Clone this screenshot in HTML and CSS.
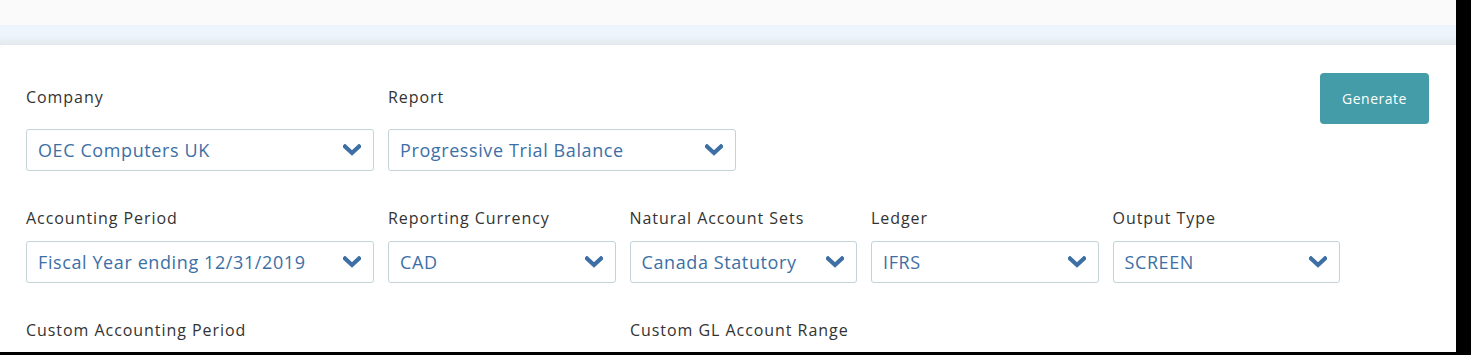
FILE: index.html
```html
<!DOCTYPE html>
<html lang="en">
<head>
    <meta charset="UTF-8">
    <meta name="viewport" content="width=device-width, initial-scale=1.0">
    <title>Report Generator</title>
    <link rel="stylesheet" href="styles.css">
</head>
<body>
    <div class="page">
        <div class="top-bar"></div>
        <div class="band"></div>

        <!-- Report form card -->
        <div class="card">
            <div class="form-row first-row">
                <div class="field wide">
                    <label>Company</label>
                    <div class="select">
                        <span>OEC Computers UK</span>
                        <svg class="chevron" viewBox="0 0 18 12"><path d="M2 2.5 L9 9 L16 2.5" /></svg>
                    </div>
                </div>
                <div class="field wide">
                    <label>Report</label>
                    <div class="select">
                        <span>Progressive Trial Balance</span>
                        <svg class="chevron" viewBox="0 0 18 12"><path d="M2 2.5 L9 9 L16 2.5" /></svg>
                    </div>
                </div>
                <button class="generate-btn">Generate</button>
            </div>

            <div class="form-row">
                <div class="field wide">
                    <label>Accounting Period</label>
                    <div class="select">
                        <span>Fiscal Year ending 12/31/2019</span>
                        <svg class="chevron" viewBox="0 0 18 12"><path d="M2 2.5 L9 9 L16 2.5" /></svg>
                    </div>
                </div>
                <div class="field">
                    <label>Reporting Currency</label>
                    <div class="select">
                        <span>CAD</span>
                        <svg class="chevron" viewBox="0 0 18 12"><path d="M2 2.5 L9 9 L16 2.5" /></svg>
                    </div>
                </div>
                <div class="field">
                    <label>Natural Account Sets</label>
                    <div class="select">
                        <span>Canada Statutory</span>
                        <svg class="chevron" viewBox="0 0 18 12"><path d="M2 2.5 L9 9 L16 2.5" /></svg>
                    </div>
                </div>
                <div class="field">
                    <label>Ledger</label>
                    <div class="select">
                        <span>IFRS</span>
                        <svg class="chevron" viewBox="0 0 18 12"><path d="M2 2.5 L9 9 L16 2.5" /></svg>
                    </div>
                </div>
                <div class="field">
                    <label>Output Type</label>
                    <div class="select">
                        <span>SCREEN</span>
                        <svg class="chevron" viewBox="0 0 18 12"><path d="M2 2.5 L9 9 L16 2.5" /></svg>
                    </div>
                </div>
            </div>

            <div class="form-row">
                <div class="field half">
                    <label>Custom Accounting Period</label>
                </div>
                <div class="field">
                    <label>Custom GL Account Range</label>
                </div>
            </div>
        </div>
    </div>
</body>
</html>
```

FILE: styles.css
```css
/* Global */
body, html {
    margin: 0;
    padding: 0;
    background-color: #000;
    font-family: 'Open Sans', 'Noto Sans', sans-serif;
}

.page {
    width: 1456px;
    height: 352px;
    overflow: hidden;
    background-color: #fafafa;
}

/* Header strips */
.top-bar {
    height: 25px;
    background-color: #fafafa;
}

.band {
    height: 20px;
    background: linear-gradient(#edf4fb 0%, #edf4fb 55%, #e2e8ee 100%);
}

/* Card */
.card {
    background-color: #fff;
    border-top-left-radius: 4px;
    padding: 28px 0 0 26px;
    height: 307px;
    box-sizing: border-box;
}

.form-row {
    display: flex;
    align-items: flex-start;
    gap: 14px;
    margin-bottom: 23px;
}

.field {
    display: flex;
    flex-direction: column;
    width: 227.5px;
}

.field.wide {
    width: 348px;
}

.field.half {
    width: 590px;
}

label {
    font-size: 16px;
    letter-spacing: 0.95px;
    color: #333;
    line-height: 22px;
    margin-top: 13px;
    margin-bottom: 12px;
    white-space: nowrap;
}

.first-row label {
    margin-bottom: 21px;
}

/* Select box */
.select {
    height: 42px;
    box-sizing: border-box;
    border: 1px solid #c3d3d9;
    border-radius: 3px;
    padding: 0 12px 0 11px;
    display: flex;
    align-items: center;
    justify-content: space-between;
    color: #3d6fa5;
    font-size: 18px;
    letter-spacing: 0.6px;
}

.chevron {
    width: 18px;
    height: 12px;
    fill: none;
    stroke: #3d6fa5;
    stroke-width: 4.2;
    stroke-linecap: square;
}

/* Generate button */
.generate-btn {
    margin-left: auto;
    margin-right: 27px;
    width: 109px;
    height: 51px;
    background-color: #439ca7;
    color: #fff;
    border: none;
    border-radius: 4px;
    font-family: inherit;
    font-size: 14px;
    letter-spacing: 0.5px;
    cursor: pointer;
}

.generate-btn:hover {
    background-color: #3a8b95;
}
```
